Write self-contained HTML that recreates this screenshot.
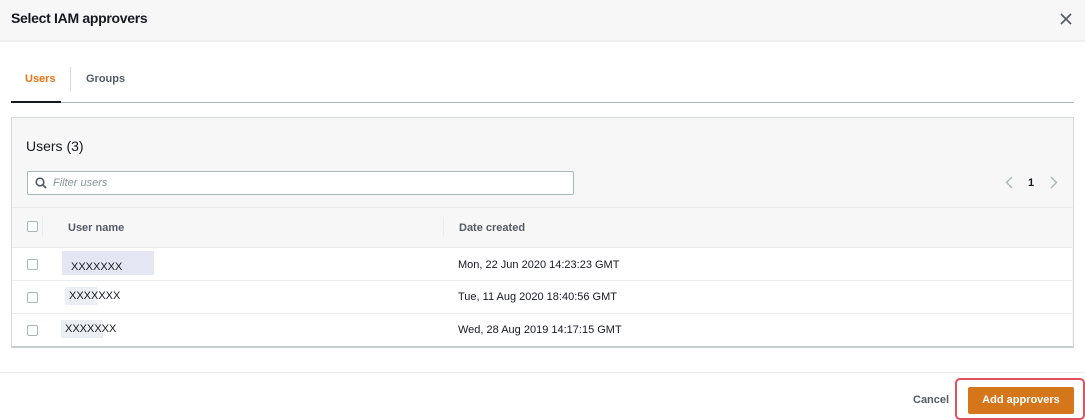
<!DOCTYPE html>
<html><head><style>
*{box-sizing:border-box;margin:0;padding:0}
body{width:1085px;height:420px;background:#fff;font-family:"Liberation Sans",sans-serif;position:relative;overflow:hidden;color:#16191f}
.abs{position:absolute}
.cb{position:absolute;width:11px;height:11px;border:1px solid #aab7b8;border-radius:2px;background:#fff}
.row{position:absolute;left:12px;width:1060px;height:33px;border-top:1px solid #eaeded;background:#fff;font-size:11px}
</style></head><body>
<div class="abs" style="left:0;top:0;width:1085px;height:42px;background:#f7f7f7;border-bottom:2px solid #f0f0f0"></div>
<div class="abs" style="left:11px;top:10px;font-size:14px;font-weight:bold;letter-spacing:-0.3px">Select IAM approvers</div>
<svg class="abs" style="left:1060px;top:13px" width="12" height="12" viewBox="0 0 12 12"><path d="M1 1L11 11M11 1L1 11" stroke="#545b64" stroke-width="1.6"/></svg>

<div class="abs" style="left:25px;top:73px;font-size:11px;font-weight:bold;color:#ec7211">Users</div>
<div class="abs" style="left:70px;top:67px;width:1px;height:24px;background:#d5dbdb"></div>
<div class="abs" style="left:86px;top:73px;font-size:11px;font-weight:bold;color:#545b64">Groups</div>
<div class="abs" style="left:11px;top:102px;width:1063px;height:1px;background:#aab7b8"></div>
<div class="abs" style="left:11px;top:101px;width:50px;height:2px;background:#16191f"></div>

<div class="abs" style="left:11px;top:117px;width:1063px;height:231px;background:#f7f7f7;border:1px solid #d5dbdb;border-bottom:2px solid #c8cdd0"></div>
<div class="abs" style="left:26px;top:138px;font-size:14px;color:#16191f">Users (3)</div>
<div class="abs" style="left:27px;top:171px;width:547px;height:24px;background:#fff;border:1px solid #aab7b8;border-radius:2px"></div>
<svg class="abs" style="left:35px;top:177px" width="12" height="12" viewBox="0 0 12 12"><circle cx="5" cy="5" r="3.8" fill="none" stroke="#545b64" stroke-width="1.6"/><path d="M7.8 7.8L11 11" stroke="#545b64" stroke-width="1.8"/></svg>
<div class="abs" style="left:53px;top:177px;font-size:11px;font-style:italic;color:#879596">Filter users</div>
<svg class="abs" style="left:1005px;top:176px" width="8" height="13" viewBox="0 0 8 13"><path d="M7 1L1.5 6.5L7 12" fill="none" stroke="#aab7b8" stroke-width="1.4"/></svg>
<div class="abs" style="left:1028px;top:177px;font-size:11px;font-weight:bold">1</div>
<svg class="abs" style="left:1050px;top:176px" width="8" height="13" viewBox="0 0 8 13"><path d="M1 1L6.5 6.5L1 12" fill="none" stroke="#aab7b8" stroke-width="1.4"/></svg>

<div class="abs" style="left:12px;top:207px;width:1061px;height:1px;background:#eaeded"></div>
<div class="cb" style="left:27px;top:221px"></div>
<div class="abs" style="left:42px;top:217px;width:1px;height:20px;background:#eaeded"></div>
<div class="abs" style="left:68px;top:222px;font-size:11px;font-weight:bold;color:#545b64">User name</div>
<div class="abs" style="left:443px;top:217px;width:1px;height:20px;background:#eaeded"></div>
<div class="abs" style="left:459px;top:222px;font-size:11px;font-weight:bold;color:#545b64">Date created</div>

<div class="row" style="top:247px"><div class="cb" style="left:15px;top:11px"></div>
<div class="abs" style="left:50px;top:3px;width:92px;height:24px;background:#e4e7f3"></div>
<div class="abs" style="left:59px;top:13px">XXXXXXX</div>
<div class="abs" style="left:446px;top:11px">Mon, 22 Jun 2020 14:23:23 GMT</div></div>
<div class="row" style="top:280px"><div class="cb" style="left:15px;top:11px"></div>
<div class="abs" style="left:53px;top:6px;width:32px;height:18px;background:#eceef6"></div>
<div class="abs" style="left:57px;top:9px">XXXXXXX</div>
<div class="abs" style="left:446px;top:10px">Tue, 11 Aug 2020 18:40:56 GMT</div></div>
<div class="row" style="top:313px"><div class="cb" style="left:15px;top:11px"></div>
<div class="abs" style="left:49px;top:6px;width:42px;height:18px;background:#eceef6"></div>
<div class="abs" style="left:53px;top:9px">XXXXXXX</div>
<div class="abs" style="left:446px;top:10px">Wed, 28 Aug 2019 14:17:15 GMT</div></div>

<div class="abs" style="left:0;top:372px;width:1085px;height:1px;background:#f0f0f0"></div>
<div class="abs" style="left:913px;top:394px;font-size:11px;font-weight:bold;color:#545b64">Cancel</div>
<div class="abs" style="left:955px;top:378px;width:130px;height:42px;border:2px solid #e4505c;border-radius:5px"></div>
<div class="abs" style="left:968px;top:387px;width:106px;height:27px;background:#d47619;border-radius:2px;color:#fff;font-size:11px;font-weight:bold;text-align:center;line-height:27px">Add approvers</div>
</body></html>
